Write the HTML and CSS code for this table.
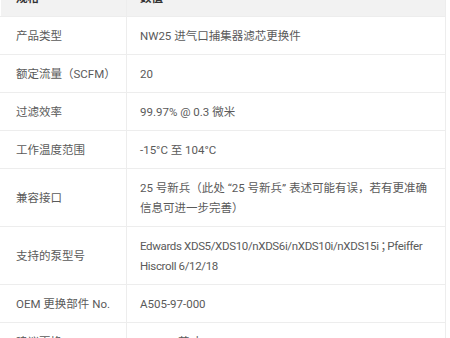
FILE: index.html
```html
<!DOCTYPE html>
<html lang="zh-CN">
<head>
<meta charset="utf-8">
<title>规格参数</title>
<link rel="stylesheet" href="styles.css">
</head>
<body>
<table class="spec">
  <colgroup><col class="col-k"><col class="col-v"></colgroup>
  <thead>
    <tr><th class="k">规格</th><th class="v">数值</th></tr>
  </thead>
  <tbody>
    <tr><td class="k">产品类型</td><td class="v">NW25 进气口捕集器滤芯更换件</td></tr>
    <tr><td class="k">额定流量（SCFM）</td><td class="v">20</td></tr>
    <tr><td class="k">过滤效率</td><td class="v">99.97% @ 0.3 微米</td></tr>
    <tr><td class="k">工作温度范围</td><td class="v">-15°C 至 104°C</td></tr>
    <tr><td class="k">兼容接口</td><td class="v">25 号新兵（此处 “25 号新兵” 表述可能有误，若有更准确信息可进一步完善）</td></tr>
    <tr><td class="k">支持的泵型号</td><td class="v tight">Edwards XDS5/XDS10/nXDS6i/nXDS10i/nXDS15i<span class="half">；</span>Pfeiffer Hiscroll 6/12/18</td></tr>
    <tr><td class="k">OEM 更换部件 No.</td><td class="v">A505-97-000</td></tr>
    <tr><td class="k">建议更换 ΔP</td><td class="v">≥10-15 英寸 H₂O</td></tr>
  </tbody>
</table>
</body>
</html>
```
FILE: styles.css
```css
html, body {
  margin: 0;
  padding: 0;
  background: #ffffff;
}
body {
  font-family: Roboto, "Noto Sans CJK SC", sans-serif;
  font-size: 11.5px;
  color: #5a5a5a;
}
.spec {
  width: 446px;
  margin-top: -22px;
  border-collapse: collapse;
  table-layout: fixed;
}
.col-k {
  width: 126px;
}
.spec th, .spec td {
  text-align: left;
  vertical-align: middle;
  line-height: 20px;
  padding: 9px 11px 8px 13px;
  border: 1px solid #ededed;
}
.spec th {
  background: #f2f2f2;
  color: #333333;
  font-weight: bold;
}
.spec .k {
  padding-left: 15px;
  border-left-color: #ffffff;
  white-space: nowrap;
}
.spec .tight {
  letter-spacing: -0.35px;
}
.half {
  font-feature-settings: "halt";
  letter-spacing: 0;
  margin-left: 2px;
  margin-right: 1px;
}
```
